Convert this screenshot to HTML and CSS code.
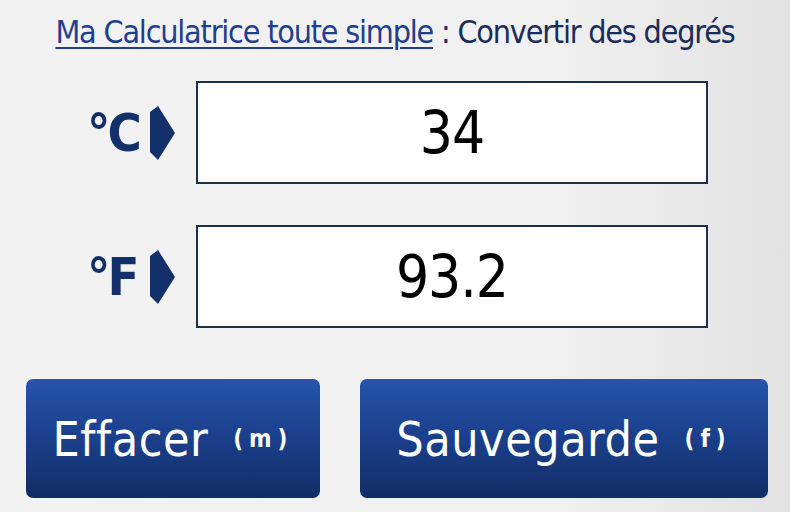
FILE: index.html
```html
<!DOCTYPE html>
<html lang="fr">
<head>
<meta charset="utf-8">
<title>Convertir des degrés</title>
<link rel="stylesheet" href="styles.css">
</head>
<body>
<div class="page">
  <h1 class="title"><a class="title-link" href="#">Ma Calculatrice toute simple</a> : Convertir des degrés</h1>
  <div class="rows">
    <div class="row">
      <div class="label">°C</div>
      <svg class="arrow" width="26" height="54" viewBox="0 0 26 54"><polygon points="0,6 8,0 25,27 8,54 0,46" fill="#14306a"/></svg>
      <div class="box"><span class="value">34</span></div>
    </div>
    <div class="row">
      <div class="label">°F</div>
      <svg class="arrow" width="26" height="54" viewBox="0 0 26 54"><polygon points="0,6 8,0 25,27 8,54 0,46" fill="#14306a"/></svg>
      <div class="box"><span class="value">93.2</span></div>
    </div>
  </div>
  <div class="buttons">
    <button class="btn btn-clear"><span class="btn-text">Effacer</span><span class="key">(m)</span></button>
    <button class="btn btn-save"><span class="btn-text">Sauvegarde</span><span class="key">(f)</span></button>
  </div>
</div>
</body>
</html>
```
FILE: styles.css
```css
html, body {
  margin: 0;
  padding: 0;
}
body {
  font-family: "DejaVu Sans Condensed", "DejaVu Sans", sans-serif;
}
.page {
  width: 790px;
  height: 512px;
  overflow: hidden;
  background: linear-gradient(to right, #f2f2f2 0%, #f0f0f0 70%, #e2e2e2 100%);
  box-sizing: border-box;
  padding-top: 13px;
}
.title {
  margin: 0;
  font-weight: normal;
  font-size: 32px;
  line-height: 38px;
  text-align: center;
  color: #1a2d5a;
  letter-spacing: -1.2px;
}
.title-link {
  color: #1f3e8e;
  text-decoration: underline;
  text-decoration-thickness: 2px;
  text-underline-offset: 4px;
}
.rows {
  margin-top: 30px;
  display: flex;
  flex-direction: column;
  gap: 41px;
}
.row {
  display: flex;
  align-items: center;
  padding-left: 87px;
}
.label {
  width: 63px;
  font-weight: bold;
  font-size: 52px;
  color: #14306a;
  letter-spacing: -3px;
}
.arrow {
  display: block;
}
.box {
  margin-left: 20px;
  width: 512px;
  height: 103px;
  box-sizing: border-box;
  border: 2px solid #1d2f4b;
  background: #ffffff;
  display: flex;
  align-items: center;
  justify-content: center;
}
.value {
  font-size: 58px;
  color: #000000;
  letter-spacing: -1px;
}
.buttons {
  margin-top: 51px;
  padding-left: 26px;
  display: flex;
  gap: 40px;
}
.btn {
  height: 119px;
  border: none;
  border-radius: 7px;
  background: linear-gradient(to bottom, #2555ab 0%, #1b418e 45%, #122d66 100%);
  color: #ffffff;
  font-family: inherit;
  display: flex;
  align-items: center;
  justify-content: center;
  padding: 0;
}
.btn-clear {
  width: 294px;
}
.btn-save {
  width: 408px;
}
.btn-text {
  font-size: 48px;
  letter-spacing: 0.5px;
}
.key {
  margin-left: 25px;
  font-size: 24px;
  font-weight: bold;
  letter-spacing: 6px;
}
```
